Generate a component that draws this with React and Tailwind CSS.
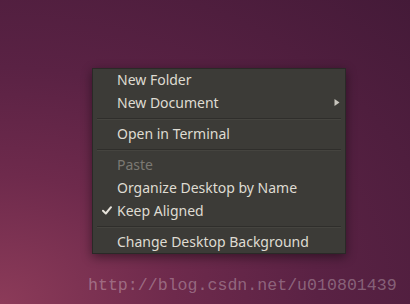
import React from "react";

const Item = ({ label, disabled, checked, submenu }) => (
  <div className="relative flex h-[23px] items-center pl-[24px] pr-2">
    {checked && (
      <svg className="absolute left-[9px] top-[7px]" width="10" height="9" viewBox="0 0 10 9">
        <path d="M1 4.8 L3.8 7.5 L9 1.2" fill="none" stroke="#e6e2da" strokeWidth="2" strokeLinecap="round" strokeLinejoin="round" />
      </svg>
    )}
    <span className={disabled ? "text-[#7b7973]" : "text-[#dfdbd2]"}>{label}</span>
    {submenu && (
      <svg className="absolute right-[5px] top-[8px]" width="6" height="7" viewBox="0 0 6 7">
        <path d="M0.5 0 L5.5 3.5 L0.5 7 Z" fill="#c8c5bd" />
      </svg>
    )}
  </div>
);

const Separator = () => (
  <div className="h-2 px-1 pt-[4px]">
    <div className="h-px bg-[#2f2e2b]" />
    <div className="h-px bg-[#45443f]" />
  </div>
);

const App = () => {
  return (
    <div className="h-[304px] w-[410px] overflow-hidden bg-[radial-gradient(ellipse_at_0%_100%,#8c3b59_0%,#6e2a4c_30%,#5a2244_55%,#441a38_100%)] pl-[92px] pt-[68px]">
      {/* Context menu */}
      <div
        className="w-[254px] border border-[#2a2927] bg-[#3c3b37] text-[14px] shadow-[0_3px_10px_rgba(0,0,0,0.45)]"
        style={{ fontFamily: '"Noto Sans", sans-serif' }}
      >
        <div className="-mt-[1px]">
          <Item label="New Folder" />
          <Item label="New Document" submenu />
          <Separator />
          <Item label="Open in Terminal" />
          <Separator />
          <Item label="Paste" disabled />
          <Item label="Organize Desktop by Name" />
          <Item label="Keep Aligned" checked />
          <Separator />
          <Item label="Change Desktop Background" />
        </div>
      </div>

      {/* Watermark */}
      <div
        className="-ml-[4px] mt-[21px] text-[16.6px] leading-[22px] text-[rgba(255,255,255,0.3)]"
        style={{ fontFamily: '"Liberation Mono", monospace' }}
      >
        http://blog.csdn.net/u010801439
      </div>
    </div>
  );
};

export default App;
